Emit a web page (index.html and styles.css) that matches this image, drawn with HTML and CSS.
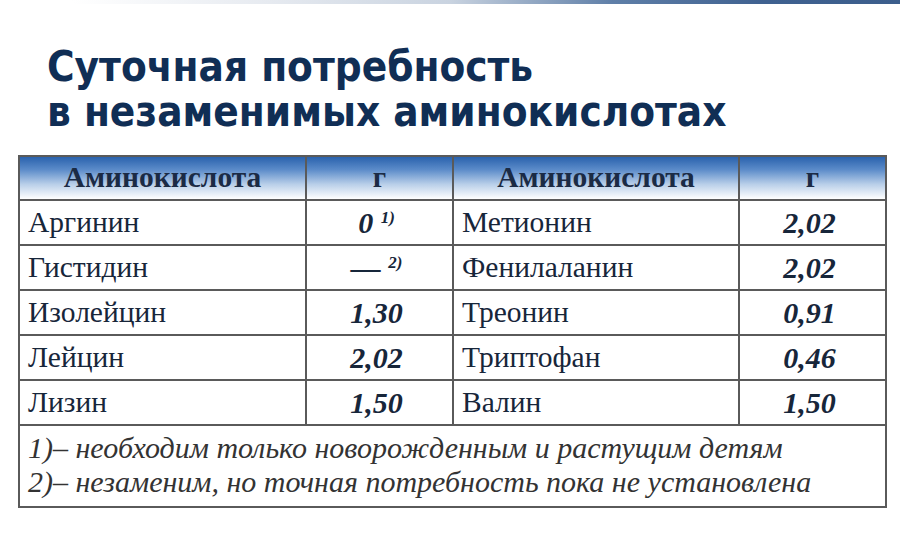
FILE: index.html
```html
<!DOCTYPE html>
<html lang="ru">
<head>
<meta charset="utf-8">
<link rel="stylesheet" href="styles.css">
</head>
<body>
<div class="topbar"></div>
<h1 class="title"><span>Суточная потребность</span><span>в незаменимых аминокислотах</span></h1>
<table class="amino">
  <colgroup>
    <col class="c-name"><col class="c-val"><col class="c-name2"><col class="c-val">
  </colgroup>
  <thead>
    <tr><th>Аминокислота</th><th>г</th><th>Аминокислота</th><th>г</th></tr>
  </thead>
  <tbody>
    <tr><td class="name">Аргинин</td><td class="val">0 <sup>1)</sup></td><td class="name">Метионин</td><td class="val">2,02</td></tr>
    <tr><td class="name">Гистидин</td><td class="val">— <sup>2)</sup></td><td class="name">Фенилаланин</td><td class="val">2,02</td></tr>
    <tr><td class="name">Изолейцин</td><td class="val">1,30</td><td class="name">Треонин</td><td class="val">0,91</td></tr>
    <tr><td class="name">Лейцин</td><td class="val">2,02</td><td class="name">Триптофан</td><td class="val">0,46</td></tr>
    <tr><td class="name">Лизин</td><td class="val">1,50</td><td class="name">Валин</td><td class="val">1,50</td></tr>
    <tr><td class="notes" colspan="4"><p>1)– необходим только новорожденным и растущим детям</p><p>2)– незаменим, но точная потребность пока не установлена</p></td></tr>
  </tbody>
</table>
</body>
</html>
```
FILE: styles.css
```css
html, body { margin: 0; padding: 0; background: #fff; }
body { width: 900px; height: 556px; overflow: hidden; }
.topbar {
  height: 4px;
  background: linear-gradient(to right, rgba(255,255,255,0) 8%, #e6eaf0 30%, #c9d3e0 50%, #5f7fa8 68%, #3f6190 85%, #3c5e8c 100%);
}
.title {
  margin: 0;
  padding: 40px 0 21px 47px;
  font-family: "DejaVu Sans Condensed", "DejaVu Sans", sans-serif;
  font-stretch: condensed;
  font-weight: bold;
  font-size: 41.8px;
  line-height: 45px;
  color: #102e55;
  height: 151px;
  box-sizing: border-box;
}
.title span { display: block; white-space: nowrap; }
.amino {
  margin: 0 0 0 18px;
  border-collapse: collapse;
  width: 867px;
  table-layout: fixed;
  font-family: "Liberation Serif", serif;
  color: #17263a;
}
.c-name { width: 287px; }
.c-val { width: 147px; }
.c-name2 { width: 286px; }
.amino th, .amino td {
  border: 2px solid #5a5a5a;
  padding: 0;
}
.amino th {
  height: 42px;
  font-size: 29.5px;
  font-weight: bold;
  color: #1b2b45;
  background: linear-gradient(to bottom, #2a62ad 0%, #5b8bc9 30%, #b9cfe9 65%, #ffffff 100%);
  text-align: center;
  vertical-align: middle;
  line-height: 1;
}
.amino td { height: 43px; vertical-align: middle; line-height: 1; }
.name { font-size: 29.5px; padding-left: 8px !important; }
.val { font-size: 30px; font-weight: bold; font-style: italic; text-align: center; padding-right: 6px !important; }
.val sup { font-size: 17px; vertical-align: 10px; line-height: 0; }
.notes {
  font-style: italic;
  font-size: 30px;
  color: #333;
  padding: 5px 0 7px 8px !important;
  height: auto !important;
}
.notes p { margin: 0; line-height: 34px; white-space: nowrap; }
```
